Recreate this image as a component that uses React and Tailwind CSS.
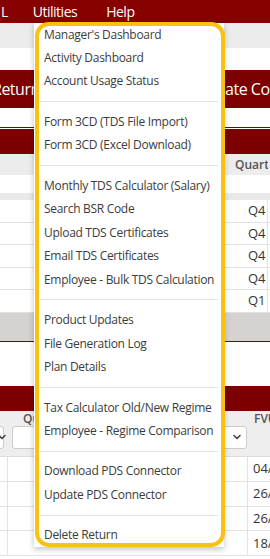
import React from "react";

const groups = [
  ["Manager's Dashboard", "Activity Dashboard", "Account Usage Status"],
  ["Form 3CD (TDS File Import)", "Form 3CD (Excel Download)"],
  [
    "Monthly TDS Calculator (Salary)",
    "Search BSR Code",
    "Upload TDS Certificates",
    "Email TDS Certificates",
    "Employee - Bulk TDS Calculation",
  ],
  ["Product Updates", "File Generation Log", "Plan Details"],
  ["Tax Calculator Old/New Regime", "Employee - Regime Comparison"],
  ["Download PDS Connector", "Update PDS Connector"],
  ["Delete Return"],
];

const topRows = ["Q4", "Q4", "Q4", "Q4", "Q1"];
const bottomRows = ["04/03/2024", "26/02/2024", "26/02/2024", "18/01/2024"];

function Chevron({ className }) {
  return (
    <svg className={className} width="10" height="10" viewBox="0 0 10 10" fill="none">
      <path d="M2 3.5 L5 6.5 L8 3.5" stroke="#444" strokeWidth="1.6" strokeLinecap="round" strokeLinejoin="round" />
    </svg>
  );
}

export default function App() {
  return (
    <div className="relative w-[270px] h-[559px] overflow-hidden bg-white font-['Open_Sans',sans-serif]">
      {/* Top navbar */}
      <div className="h-[23px] bg-[#870000] flex items-center text-white text-[14px] tracking-[-0.5px] whitespace-nowrap">
        <span className="ml-[1px]">L</span>
        <span className="ml-[25px]">Utilities</span>
        <span className="ml-[29px]">Help</span>
      </div>
      <div className="h-[25px] bg-[#ececec]" />
      <div className="h-[22px] bg-white" />
      {/* Action band */}
      <div className="h-[38px] bg-[#7d0000] flex items-center text-white text-[16px] tracking-[-0.5px] whitespace-nowrap overflow-hidden">
        <div className="w-[209px] shrink-0 -ml-[8px]">Return</div>
        <div className="shrink-0">Create Correction</div>
      </div>
      <div className="h-[20px] bg-white border-b border-[#7d0000]" />
      <div className="h-px bg-white" />
      <div className="h-[25px] bg-[#7d0000]" />
      {/* Top table header */}
      <div className="h-[21px] bg-[#ececec] grid grid-cols-[225px_43px_1fr] items-center">
        <div />
        <div className="pl-[10px] text-[12px] font-semibold text-[#555] whitespace-nowrap overflow-hidden">Quarter</div>
        <div />
      </div>
      <div className="h-[18px] bg-white" />
      <div className="h-[7px] bg-[#e9e9e9]" />
      {topRows.map((q, i) => (
        <div key={i} className="h-[22.6px] grid grid-cols-[225px_43px_1fr] border-b border-[#e2e2e2] text-[13px] text-[#333]">
          <div className="border-r border-[#e2e2e2]" />
          <div className="flex items-center pl-[23px] border-r border-[#e2e2e2]">{q}</div>
          <div />
        </div>
      ))}
      <div className="h-[29px] bg-[#d6d2d2] border-b border-[#7d0000]" />
      <div className="h-[45px] bg-white border-b border-[#7d0000]" />
      <div className="h-[24px] bg-[#7d0000]" />
      {/* Bottom table header */}
      <div className="h-[46px] bg-[#eeeeee] grid grid-cols-[8px_240px_1fr] border-b border-[#dddddd]">
        <div className="relative">
          <div className="absolute right-[4px] top-[15px] h-[23px] w-[30px] bg-white border border-[#cccccc] rounded-[3px] flex items-center justify-end">
            <Chevron className="-mr-[4px]" />
          </div>
        </div>
        <div className="flex flex-col pl-[4px] pr-[1px]">
          <div className="h-[15px] pl-[11px] pt-[1px] text-[12px] leading-[14px] font-semibold text-[#555]">Quarter</div>
          <div className="h-[23px] bg-white border border-[#cccccc] rounded-[3px] flex items-center justify-end pr-[4px]">
            <Chevron />
          </div>
        </div>
        <div className="pl-[6px] pt-[1px] text-[12px] leading-[14px] font-semibold text-[#555] whitespace-nowrap overflow-hidden">FVU Date</div>
      </div>
      {bottomRows.map((d, i) => (
        <div key={i} className="h-[24.8px] grid grid-cols-[8px_240px_1fr] border-b border-[#e2e2e2] text-[13px] text-[#333]">
          <div className="border-r border-[#e2e2e2]" />
          <div className="border-r border-[#e2e2e2]" />
          <div className="flex items-center pl-[5px] whitespace-nowrap overflow-hidden">{d}</div>
        </div>
      ))}

      {/* Dropdown menu */}
      <div className="absolute left-[34px] top-[23px] w-[190px] bg-white shadow-[0_2px_6px_rgba(0,0,0,0.25)]">
        {groups.map((g, gi) => (
          <div key={gi}>
            {gi > 0 && <div className="h-px bg-[#e3e3e3] mx-[6px] my-[8.1px]" />}
            {g.map((item) => (
              <div
                key={item}
                className="h-[23.4px] flex items-center pl-[10px] text-[12px] tracking-[-0.3px] text-[#3c3c3c] whitespace-nowrap"
              >
                {item}
              </div>
            ))}
          </div>
        ))}
      </div>

      {/* Highlight outline */}
      <div className="absolute left-[35px] top-[22px] w-[190px] h-[525px] border-[4px] border-[#f9c20e] rounded-[14px] pointer-events-none" />
    </div>
  );
}
